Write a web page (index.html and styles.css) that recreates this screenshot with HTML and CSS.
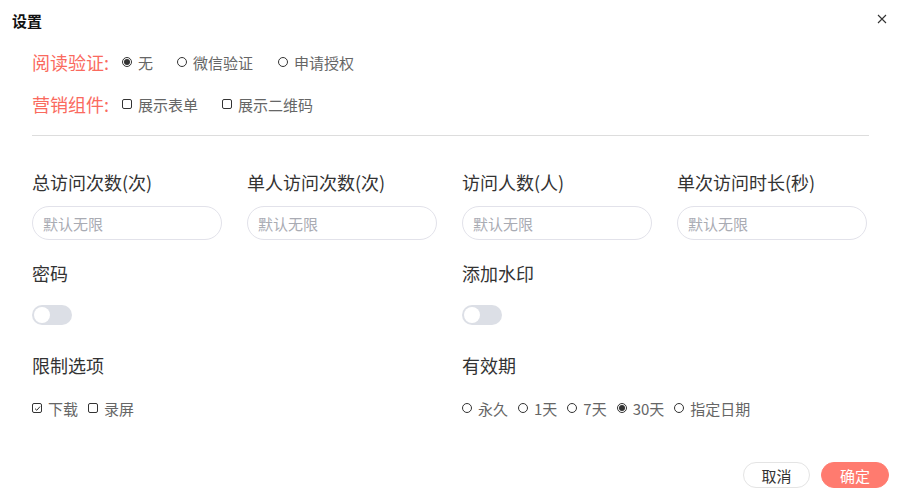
FILE: index.html
```html
<!DOCTYPE html>
<html lang="zh-CN">
<head>
    <meta charset="UTF-8">
    <meta name="viewport" content="width=device-width, initial-scale=1.0">
    <title>设置</title>
    <link rel="stylesheet" href="styles.css">
</head>
<body>
    <div class="dialog">
        <div class="dialogHeader">
            <span class="dialogTitle">设置</span>
            <span class="closeBtn">
                <svg width="10" height="10" viewBox="0 0 10 10"><path d="M1 1L9 9M9 1L1 9" stroke="#333" stroke-width="1.1" fill="none"/></svg>
            </span>
        </div>
        <div class="dialogBody">
            <div class="optionRow first">
                <span class="rowLabel">阅读验证:</span>
                <label class="radio checked"><i></i>无</label>
                <label class="radio wide"><i></i>微信验证</label>
                <label class="radio"><i></i>申请授权</label>
            </div>
            <div class="optionRow second">
                <span class="rowLabel">营销组件:</span>
                <label class="check wide2"><i></i>展示表单</label>
                <label class="check"><i></i>展示二维码</label>
            </div>
            <div class="line"></div>

            <div class="grid">
                <div class="field">
                    <div class="fieldLabel">总访问次数(次)</div>
                    <input class="input" placeholder="默认无限">
                </div>
                <div class="field">
                    <div class="fieldLabel">单人访问次数(次)</div>
                    <input class="input" placeholder="默认无限">
                </div>
                <div class="field">
                    <div class="fieldLabel">访问人数(人)</div>
                    <input class="input" placeholder="默认无限">
                </div>
                <div class="field">
                    <div class="fieldLabel">单次访问时长(秒)</div>
                    <input class="input" placeholder="默认无限">
                </div>
            </div>

            <div class="grid gridSwitch">
                <div class="field span2">
                    <div class="fieldLabel">密码</div>
                    <span class="switch"><i></i></span>
                </div>
                <div class="field span2">
                    <div class="fieldLabel">添加水印</div>
                    <span class="switch"><i></i></span>
                </div>
            </div>

            <div class="grid gridOpts">
                <div class="field span2">
                    <div class="fieldLabel">限制选项</div>
                    <div class="smallOpts">
                        <label class="check checked"><i><svg width="7" height="7" viewBox="0 0 7 7"><path d="M1 3.6L2.8 5.3L6 1.6" stroke="#333" stroke-width="1" fill="none"/></svg></i>下载</label>
                        <label class="check"><i></i>录屏</label>
                    </div>
                </div>
                <div class="field span2">
                    <div class="fieldLabel">有效期</div>
                    <div class="smallOpts">
                        <label class="radio"><i></i>永久</label>
                        <label class="radio"><i></i>1天</label>
                        <label class="radio"><i></i>7天</label>
                        <label class="radio checked"><i></i>30天</label>
                        <label class="radio"><i></i>指定日期</label>
                    </div>
                </div>
            </div>
        </div>
        <div class="dialogFooter">
            <button class="btn">取消</button>
            <button class="btn primary">确定</button>
        </div>
    </div>
</body>
</html>
```

FILE: styles.css
```css
*{margin:0;padding:0;box-sizing:border-box;}
html,body{
    height:100%;
    overflow:hidden;
    background:#fff;
}
body{
    font-family:"Microsoft YaHei","Noto Sans CJK SC","Noto Sans",sans-serif;
    color:#333;
}
.dialog{
    width:902px;
    height:503px;
}
.dialogHeader{
    height:42px;
    padding:0 12px;
    display:flex;
    align-items:center;
    justify-content:space-between;
}
.dialogTitle{
    font-size:15px;
    font-weight:bold;
    color:#111;
    line-height:20px;
    margin-top:-1px;
}
.closeBtn{
    display:flex;
    width:10px;
    height:10px;
    margin-top:-4px;
    margin-right:3px;
}
.dialogBody{
    padding:0 33px 0 32px;
}
.optionRow{
    display:flex;
    align-items:center;
    height:20px;
    font-size:15px;
    color:#666;
}
.optionRow.first{margin-top:10px;}
.optionRow.second{margin-top:22px;}
.rowLabel{
    font-size:18px;
    line-height:20px;
    color:#fa6a5e;
    width:90px;
}
.radio,.check{
    display:inline-flex;
    align-items:center;
    color:#666;
    font-size:15px;
    margin-right:24px;
}
.radio i,.check i{
    display:inline-flex;
    align-items:center;
    justify-content:center;
    width:10px;
    height:10px;
    border:1px solid #333;
    margin:0 6px 0 0;
}
.radio i{
    border-radius:50%;
}
.radio.checked i::after{
    content:"";
    width:6px;
    height:6px;
    border-radius:50%;
    background:#333;
}
.check i{
    border-radius:2px;
}
.optionRow .radio.wide{margin-right:25px;}
.line{
    height:1px;
    background:#ddd;
    margin-top:21px;
}
.grid{
    display:grid;
    grid-template-columns:repeat(4,190px);
    column-gap:25px;
}
.line + .grid{margin-top:35px;}
.span2{grid-column:span 2;}
.fieldLabel{
    font-size:18px;
    line-height:22px;
    color:#333;
}
.input{
    display:block;
    width:100%;
    height:34px;
    margin-top:13px;
    border:1px solid #e2e2ea;
    border-radius:17px;
    padding:0 10px;
    font-family:inherit;
    font-size:15px;
    outline:none;
}
.input::placeholder{
    color:#a9abb3;
}
.gridSwitch{margin-top:22px;}
.switch{
    display:flex;
    align-items:center;
    width:40px;
    height:20px;
    margin-top:21px;
    border-radius:10px;
    background:#dcdfe6;
    padding:0 2px;
}
.switch i{
    width:16px;
    height:16px;
    border-radius:50%;
    background:#fff;
}
.gridOpts{margin-top:29px;}
.smallOpts{
    display:flex;
    align-items:center;
    height:20px;
    margin-top:22px;
}
.smallOpts .radio,.smallOpts .check{
    margin-right:10px;
}
.dialogFooter{
    display:flex;
    justify-content:flex-end;
    gap:11px;
    padding:0 13px 0 0;
    margin-top:44px;
}
.btn{
    height:26px;
    width:67px;
    border-radius:13px;
    border:1px solid #e4e4e4;
    background:#fff;
    color:#333;
    font-family:inherit;
    font-size:15px;
}
.btn.primary{
    width:68px;
    border-color:#ff7b6f;
    background:#ff7b6f;
    color:#fff;
}
```
